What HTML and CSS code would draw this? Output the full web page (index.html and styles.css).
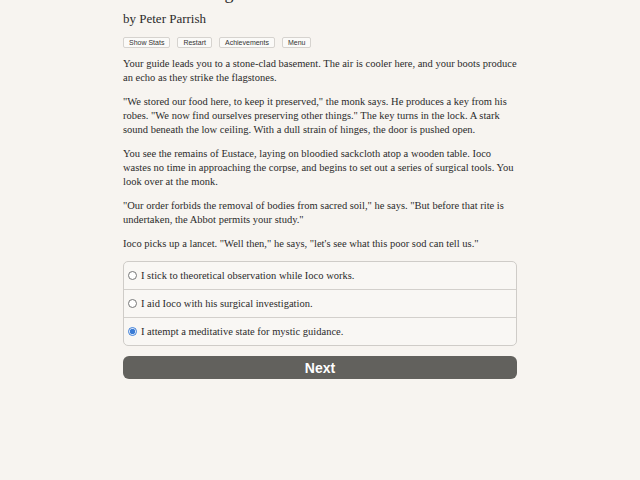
FILE: index.html
```html
<!DOCTYPE html>
<html lang="en">
<head>
    <meta charset="UTF-8">
    <title>The Reckoning</title>
    <link rel="stylesheet" href="styles.css">
</head>
<body>
    <div class="container">
        <div class="header">
            <h1 class="header__title">The Reckoning</h1>
            <h2 class="header__author">by Peter Parrish</h2>
            <div class="header__buttons">
                <button class="spaced-button">Show Stats</button>
                <button class="spaced-button">Restart</button>
                <button class="spaced-button">Achievements</button>
                <button class="spaced-button">Menu</button>
            </div>
        </div>
        <div class="story">
            <p>Your guide leads you to a stone-clad basement. The air is cooler here, and your boots produce an echo as they strike the flagstones.</p>
            <p>"We stored our food here, to keep it preserved," the monk says. He produces a key from his robes. "We now find ourselves preserving other things." The key turns in the lock. A stark sound beneath the low ceiling. With a dull strain of hinges, the door is pushed open.</p>
            <p>You see the remains of Eustace, laying on bloodied sackcloth atop a wooden table. Ioco wastes no time in approaching the corpse, and begins to set out a series of surgical tools. You look over at the monk.</p>
            <p>"Our order forbids the removal of bodies from sacred soil," he says. "But before that rite is undertaken, the Abbot permits your study."</p>
            <p>Ioco picks up a lancet. "Well then," he says, "let's see what this poor sod can tell us."</p>
        </div>
        <form class="choices">
            <label class="choices__item">
                <input type="radio" name="choice" value="0">
                <span>I stick to theoretical observation while Ioco works.</span>
            </label>
            <label class="choices__item">
                <input type="radio" name="choice" value="1">
                <span>I aid Ioco with his surgical investigation.</span>
            </label>
            <label class="choices__item">
                <input type="radio" name="choice" value="2" checked>
                <span>I attempt a meditative state for mystic guidance.</span>
            </label>
        </form>
        <button class="next">Next</button>
    </div>
</body>
</html>
```

FILE: styles.css
```css
html, body {
    margin: 0;
    padding: 0;
    background-color: #f7f4f0;
}
body {
    font-family: "Liberation Serif", "DejaVu Serif", serif;
    color: #2b2b2b;
}
.container {
    width: 394px;
    margin: 0 auto;
}
.header__title {
    margin: -19px 0 6px;
    font-size: 18px;
    line-height: 24px;
    font-weight: normal;
}
.header__author {
    margin: 0;
    font-size: 13px;
    line-height: 16px;
    font-weight: normal;
}
.header__buttons {
    display: flex;
    gap: 7px;
    margin-top: 10px;
}
.spaced-button {
    height: 11px;
    padding: 0 5px;
    border: 1px solid #d6d3cf;
    border-radius: 2px;
    background-color: #fbfaf8;
    font-family: "Liberation Sans", Arial, sans-serif;
    font-size: 7px;
    line-height: 9px;
    color: #333;
}
.story {
    margin-top: 9px;
    font-size: 10.5px;
    line-height: 14px;
}
.story p {
    margin: 0 0 10px;
}
.choices {
    margin: 9px 0 0;
    border: 1px solid #cfccc8;
    border-radius: 5px;
    background-color: #f9f7f4;
}
.choices__item {
    display: flex;
    align-items: center;
    height: 27px;
    padding-left: 4px;
    font-size: 10.5px;
    border-top: 1px solid #d3d0cc;
}
.choices__item:first-child {
    border-top: none;
}
.choices__item input {
    width: 9px;
    height: 9px;
    margin: 0 4px 0 0;
    accent-color: #3a7bd5;
}
.next {
    display: block;
    width: 100%;
    height: 23px;
    margin-top: 10px;
    border: none;
    border-radius: 6px;
    background-color: #62615d;
    color: #fff;
    font-family: "Liberation Sans", Arial, sans-serif;
    font-size: 14px;
    font-weight: bold;
}
```
